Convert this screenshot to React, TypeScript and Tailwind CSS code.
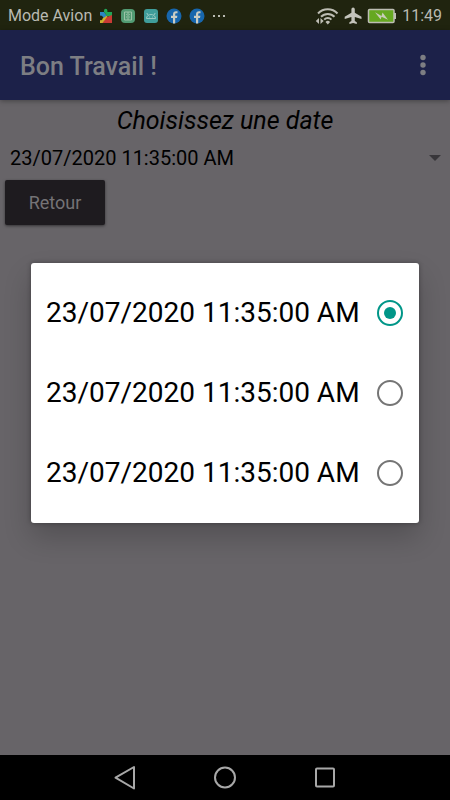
import { useState } from "react"

interface DateOption {
  id: string
  label: string
}

const dates: DateOption[] = [
  { id: "date-1", label: "23/07/2020 11:35:00 AM" },
  { id: "date-2", label: "23/07/2020 11:35:00 AM" },
  { id: "date-3", label: "23/07/2020 11:35:00 AM" },
]

function PuzzleIcon() {
  return (
    <svg viewBox="0 0 14 16" className="h-4 w-3.5" aria-hidden="true">
      <path d="M1 4h4l3 4-4 3a1.600 1.600 0 0 0-3-2z" fill="#2a86c4" />
      <path d="M5 4V2.500a1.700 1.700 0 0 1 3.400 0V4H13v5L8 8z" fill="#22a556" />
      <path d="M1 15v-3a1.600 1.600 0 0 0 2.500-1.500L8 7.500l3 7.500z" fill="#cbb02e" />
      <path d="M13 7v8H3.500L8 9z" fill="#c93a34" />
      <circle cx="1.800" cy="9.300" r="1.700" fill="#20240f" />
    </svg>
  )
}

function BookIcon() {
  return (
    <svg viewBox="0 0 16 16" className="h-4 w-4" aria-hidden="true">
      <rect x="1" y="1" width="14" height="14" rx="4" fill="#519b73" />
      <path d="M4.500 4h7v8h-7zM8 4v8M6 6.500h.8M9.200 6.500h.8M6 9h1M9.200 9h.8" fill="none" stroke="#a3c7ad" strokeWidth="0.9" />
    </svg>
  )
}

function AndroidIcon() {
  return (
    <svg viewBox="0 0 16 16" className="h-4 w-4" aria-hidden="true">
      <rect x="1" y="1" width="14" height="14" rx="3" fill="#3f9d9b" />
      <path d="M3.500 10.500a4.500 4 0 0 1 9 0zM5 7 3.800 5M11 7l1.200-2M6 9h.8M9.200 9h.8" fill="none" stroke="#a4cfc7" strokeWidth="0.9" />
    </svg>
  )
}

function FacebookIcon() {
  return (
    <svg viewBox="0 0 16 16" className="h-4 w-4" aria-hidden="true">
      <circle cx="8" cy="8" r="7.500" fill="#1766ad" />
      <path d="M7 15.400V10H5V7.700h2V6.200c0-2 1.200-3 3-3l1.500.1v2h-1c-1 0-1.300.5-1.300 1.200v1.200h2.200L11 10H9.200v5.400z" fill="#c9ccc4" />
    </svg>
  )
}

function WifiIcon() {
  return (
    <svg viewBox="0 0 24 18" className="h-[18px] w-6" aria-hidden="true">
      <g fill="none" stroke="#bdbdb4" strokeWidth="2">
        <path d="M3 6.500a13.500 13.500 0 0 1 19.500 0" />
        <path d="M6 9.700a9.500 9.500 0 0 1 13.500 0" />
        <path d="M9.200 12.600a5 5 0 0 1 7.200 0" />
      </g>
      <path d="M10.500 15a3.200 3.200 0 0 1 4.600 0l-2.300 2.500zM4 11v6l-3.200-3zM5.500 11v6l3.200-3z" fill="#bdbdb4" />
    </svg>
  )
}

function PlaneIcon() {
  return (
    <svg viewBox="0 0 18 18" className="h-[18px] w-[18px]" aria-hidden="true">
      <path
        d="M17.500 12v-2.200l-6.700-4V2.300a1.700 1.700 0 0 0-3.400 0v3.500L.7 9.800V12l6.700-2.100v4l-2 1.400v1.700l3.700-1.100 3.700 1.100v-1.700l-2-1.400v-4z"
        fill="#c4c4bc"
      />
    </svg>
  )
}

function BatteryIcon() {
  return (
    <svg viewBox="0 0 30 16" className="h-4 w-[30px]" aria-hidden="true">
      <rect x="1.500" y="1.500" width="25.500" height="13" rx="1" fill="#66a821" stroke="#bdbdb4" strokeWidth="1.500" />
      <path d="M27 5h2v6h-2z" fill="#bdbdb4" />
      <path d="M8 4.300 14.500 8l1-3.500 5.500 7.300-6.500-3-.8 2.800z" fill="#c9cdb8" />
    </svg>
  )
}

function StatusBar() {
  return (
    <div className="flex h-[30px] items-center justify-between bg-[#20240f] px-2 pt-px text-base text-[#b9bab2]">
      <div className="flex items-center gap-[7px]">
        <span>Mode Avion</span>
        <PuzzleIcon />
        <BookIcon />
        <AndroidIcon />
        <FacebookIcon />
        <FacebookIcon />
        <svg viewBox="0 0 14 4" className="h-1 w-3.5" aria-hidden="true">
          <path d="M1 1h2v2H1zM6 1h2v2H6zM11 1h2v2h-2z" fill="#b9bab2" />
        </svg>
      </div>
      <div className="flex items-center gap-[5px]">
        <WifiIcon />
        <PlaneIcon />
        <BatteryIcon />
        <span>11:49</span>
      </div>
    </div>
  )
}

function NavigationBar() {
  return (
    <nav className="flex h-[45px] items-center justify-center gap-[68px] bg-black">
      <button type="button" aria-label="Précédent">
        <svg viewBox="0 0 32 32" className="h-8 w-8" fill="none" stroke="#a8a8a8" strokeWidth="2">
          <path d="M25 5v21.500L6.500 15.700z" strokeLinejoin="round" />
        </svg>
      </button>
      <button type="button" aria-label="Accueil">
        <svg viewBox="0 0 32 32" className="h-8 w-8" fill="none" stroke="#a8a8a8" strokeWidth="2">
          <circle cx="16" cy="15.500" r="10" />
        </svg>
      </button>
      <button type="button" aria-label="Applications récentes">
        <svg viewBox="0 0 32 32" className="h-8 w-8" fill="none" stroke="#a8a8a8" strokeWidth="2">
          <rect x="7" y="6.500" width="18" height="18" rx="1" />
        </svg>
      </button>
    </nav>
  )
}

export default function App() {
  const [selected, setSelected] = useState(dates[0].id)

  return (
    <div className="flex min-h-screen flex-col bg-[#676468] font-['Roboto',sans-serif]">
      <StatusBar />

      <div className="relative flex flex-1 flex-col">
        <header className="flex h-[70px] items-center justify-between bg-[#1c2149] pr-[17px] pl-5 text-[#7d7e83] shadow-[0_1px_5px_rgba(0,0,0,0.35)]">
          <h1 className="pt-1 text-[25px] leading-8 font-medium">Bon Travail !</h1>
          <button type="button" aria-label="Plus d'options">
            <svg viewBox="0 0 20 24" className="h-6 w-5" fill="currentColor">
              <circle cx="10" cy="4.500" r="2.700" />
              <circle cx="10" cy="12" r="2.700" />
              <circle cx="10" cy="19.500" r="2.700" />
            </svg>
          </button>
        </header>

        <main className="flex-1">
          <label htmlFor="date" className="block pt-1 text-center text-[25px] leading-[34px] text-black italic">
            Choisissez une date
          </label>
          <div className="grid h-10 items-center">
            <select
              id="date"
              value={selected}
              onChange={(e) => setSelected(e.target.value)}
              className="col-start-1 row-start-1 h-10 w-full appearance-none bg-transparent px-[10px] text-xl text-black"
            >
              {dates.map((date) => (
                <option key={date.id} value={date.id}>
                  {date.label}
                </option>
              ))}
            </select>
            <svg
              viewBox="0 0 12 6"
              className="pointer-events-none col-start-1 row-start-1 mr-[9px] h-[6px] w-3 justify-self-end"
              aria-hidden="true"
            >
              <path d="M0 0h12L6 6z" fill="#38363a" />
            </svg>
          </div>
          <button
            type="button"
            className="mt-[2px] ml-[5px] h-[45px] w-[100px] rounded-[2px] bg-[#1e1b1f] pt-px text-lg text-[#757376] shadow-[0_1px_3px_rgba(0,0,0,0.5)]"
          >
            Retour
          </button>
        </main>

        {/* Date picker dialog */}
        <div className="absolute inset-0 flex items-center justify-center px-[31px]">
          <div
            role="dialog"
            aria-label="Choisissez une date"
            className="w-full rounded-[3px] bg-white py-[10px] shadow-[0_14px_28px_rgba(0,0,0,0.2),0_0_5px_rgba(0,0,0,0.3)]"
          >
            {dates.map((date) => (
              <label key={date.id} className="flex h-20 items-center justify-between pr-4 pl-[15px] text-[28px] text-black">
                <span className="pt-px whitespace-nowrap">{date.label}</span>
                <input
                  type="radio"
                  name="date-option"
                  value={date.id}
                  checked={selected === date.id}
                  onChange={() => setSelected(date.id)}
                  className="h-[26px] w-[26px] appearance-none rounded-full border-2 border-[#757575] bg-clip-content p-[5px] checked:border-[#009688] checked:bg-[#009688]"
                />
              </label>
            ))}
          </div>
        </div>
      </div>

      <NavigationBar />
    </div>
  )
}
